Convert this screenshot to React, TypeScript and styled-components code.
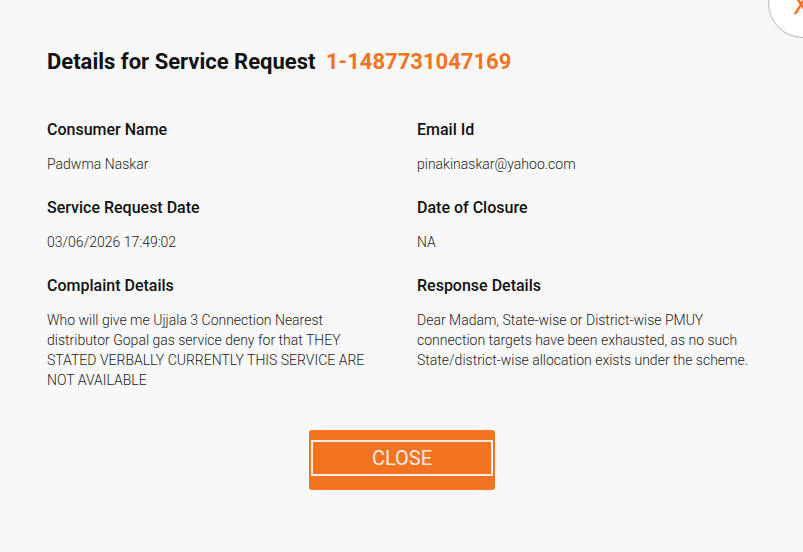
import styled, { createGlobalStyle } from "styled-components";

const GlobalStyle = createGlobalStyle`
  html, body {
    margin: 0;
    padding: 0;
    background: #f8f8f8;
    font-family: Roboto, "Liberation Sans", sans-serif;
  }
`;

interface Detail {
  label: string;
  value: string;
}

const details: Detail[] = [
  { label: "Consumer Name", value: "Padwma Naskar" },
  { label: "Email Id", value: "pinakinaskar@yahoo.com" },
  { label: "Service Request Date", value: "03/06/2026 17:49:02" },
  { label: "Date of Closure", value: "NA" },
  {
    label: "Complaint Details",
    value:
      "Who will give me Ujjala 3 Connection Nearest distributor Gopal gas service deny for that THEY STATED VERBALLY CURRENTLY THIS SERVICE ARE NOT AVAILABLE",
  },
  {
    label: "Response Details",
    value:
      "Dear Madam, State-wise or District-wise PMUY connection targets have been exhausted, as no such State/district-wise allocation exists under the scheme.",
  },
];

function App() {
  return (
    <Modal>
      <GlobalStyle />
      <CloseCircle aria-label="close">X</CloseCircle>
      <Title>
        Details for Service Request <RequestId>1-1487731047169</RequestId>
      </Title>
      <Grid>
        {details.map((d) => (
          <Field key={d.label}>
            <Label>{d.label}</Label>
            <Value>{d.value}</Value>
          </Field>
        ))}
      </Grid>
      <Footer>
        <CloseButton>
          <span>CLOSE</span>
        </CloseButton>
      </Footer>
    </Modal>
  );
}

const Modal = styled.div`
  position: relative;
  width: 803px;
  height: 552px;
  overflow: hidden;
  background: #f8f8f8;
  padding: 49px 0 0 47px;
  box-sizing: border-box;
`;

const CloseCircle = styled.div`
  position: absolute;
  top: -32px;
  left: 768px;
  width: 70px;
  height: 70px;
  border-radius: 50%;
  background: #fff;
  border: 1px solid #b5b5b5;
  box-sizing: border-box;
  color: #f47321;
  font-size: 26px;
  font-weight: 400;
  line-height: 1;
  padding: 23px 0 0 24px;
`;

const Title = styled.h2`
  margin: 0;
  font-size: 22px;
  font-weight: 700;
  line-height: 26px;
  color: #111;
`;

const RequestId = styled.span`
  color: #f47321;
  margin-left: 5px;
`;

const Grid = styled.div`
  display: grid;
  grid-template-columns: 370px 1fr;
  row-gap: 24px;
  margin-top: 45px;
`;

const Field = styled.div`
  display: flex;
  flex-direction: column;
  gap: 14px;
`;

const Label = styled.div`
  font-size: 16px;
  font-weight: 500;
  line-height: 20px;
  color: #111;
`;

const Value = styled.div`
  max-width: 340px;
  font-size: 14px;
  font-weight: 300;
  line-height: 20px;
  color: #222;
`;

const Footer = styled.div`
  display: flex;
  justify-content: center;
  width: 710px;
  margin-top: 40px;
`;

const CloseButton = styled.div`
  width: 186px;
  height: 60px;
  background: #f47321;
  border-radius: 3px;
  padding: 10px 2px 14px;
  box-sizing: border-box;

  span {
    display: flex;
    align-items: center;
    justify-content: center;
    height: 100%;
    border: 2px solid #fbeee6;
    box-sizing: border-box;
    color: #fbeee6;
    font-size: 20px;
    font-weight: 400;
  }
`;

export default App;
